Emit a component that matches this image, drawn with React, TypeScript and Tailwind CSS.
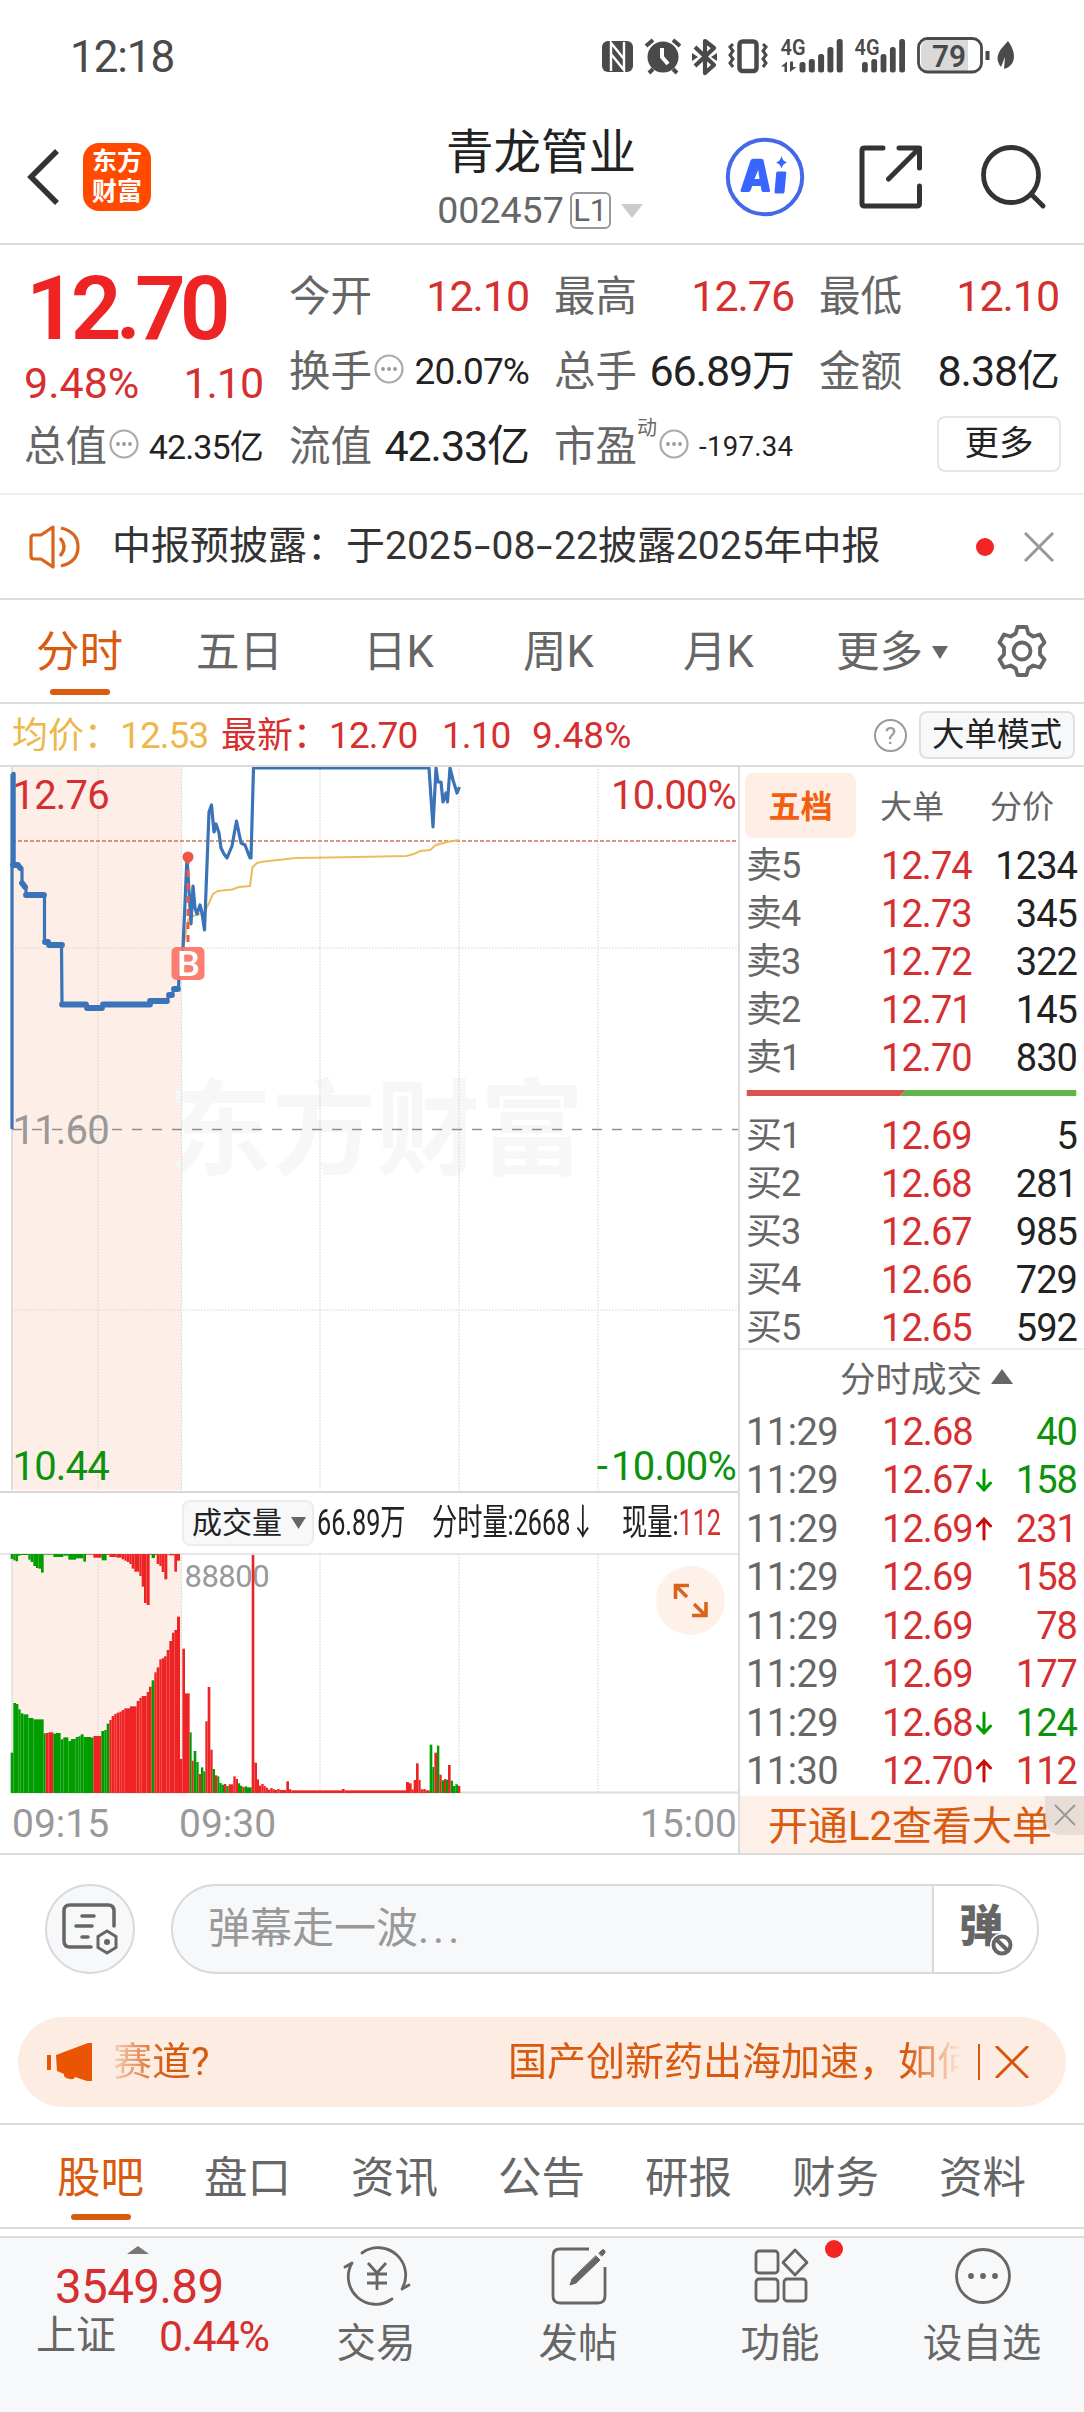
import type { ReactNode } from "react";
import clsx from "clsx";

const RED = "#ee2424";
const GREEN = "#009d00";

type Tone = "up" | "down" | "plain";

const toneClass: Record<Tone, string> = {
  up: "text-[#d62f2f]",
  down: "text-[#0c920c]",
  plain: "text-[#222]",
};

const asks = [
  ["卖5", "12.74", "1234"],
  ["卖4", "12.73", "345"],
  ["卖3", "12.72", "322"],
  ["卖2", "12.71", "145"],
  ["卖1", "12.70", "830"],
];

const bids = [
  ["买1", "12.69", "5"],
  ["买2", "12.68", "281"],
  ["买3", "12.67", "985"],
  ["买4", "12.66", "729"],
  ["买5", "12.65", "592"],
];

const trades: { time: string; price: string; dir?: "up" | "down"; vol: string; tone: Tone }[] = [
  { time: "11:29", price: "12.68", vol: "40", tone: "down" },
  { time: "11:29", price: "12.67", dir: "down", vol: "158", tone: "down" },
  { time: "11:29", price: "12.69", dir: "up", vol: "231", tone: "up" },
  { time: "11:29", price: "12.69", vol: "158", tone: "up" },
  { time: "11:29", price: "12.69", vol: "78", tone: "up" },
  { time: "11:29", price: "12.69", vol: "177", tone: "up" },
  { time: "11:29", price: "12.68", dir: "down", vol: "124", tone: "down" },
  { time: "11:30", price: "12.70", dir: "up", vol: "112", tone: "up" },
];

// Volume bars as "right edge, top, colour", in thirds of a pixel.
const volume: [number, number, string][] = [
  [40, 758, "g"], [48, 609, "g"], [55, 612, "g"], [62, 628, "g"], [70, 640, "g"], [85, 643, "g"],
  [100, 654, "g"], [131, 658, "g"], [137, 700, "g"], [145, 699, "r"], [160, 697, "r"], [168, 701, "g"],
  [182, 699, "g"], [190, 718, "g"], [205, 712, "g"], [213, 723, "g"], [227, 717, "g"], [235, 711, "g"],
  [242, 709, "g"], [251, 703, "g"], [273, 711, "g"], [280, 713, "g"], [304, 708, "r"], [313, 693, "g"],
  [320, 690, "g"], [328, 671, "g"], [335, 660, "r"], [343, 648, "r"], [350, 642, "r"], [358, 638, "r"],
  [365, 635, "r"], [373, 630, "r"], [390, 625, "r"], [410, 619, "r"], [418, 603, "r"], [425, 594, "r"],
  [440, 588, "r"], [447, 576, "r"], [455, 560, "r"], [463, 541, "g"], [470, 517, "r"], [478, 502, "r"],
  [485, 478, "r"], [492, 475, "r"], [500, 469, "r"], [508, 450, "r"], [516, 423, "r"], [523, 398, "r"],
  [531, 390, "r"], [540, 350, "r"], [547, 777, "r"], [555, 446, "r"], [569, 580, "r"], [575, 697, "g"],
  [581, 782, "r"], [589, 753, "g"], [596, 786, "g"], [603, 822, "r"], [610, 802, "g"], [616, 814, "g"],
  [623, 664, "r"], [631, 561, "r"], [638, 749, "r"], [645, 807, "g"], [652, 826, "r"], [658, 829, "g"],
  [665, 849, "g"], [672, 854, "g"], [679, 852, "r"], [686, 858, "g"], [700, 853, "r"], [707, 829, "r"],
  [714, 837, "r"], [720, 850, "g"], [727, 857, "g"], [734, 861, "r"], [741, 859, "g"], [755, 862, "g"],
  [763, 165, "r"], [771, 788, "r"], [777, 838, "r"], [784, 857, "r"], [791, 852, "r"], [797, 858, "r"],
  [804, 863, "r"], [811, 869, "r"], [818, 864, "r"], [825, 868, "r"], [832, 870, "r"], [839, 867, "r"],
  [859, 870, "r"], [867, 844, "r"], [874, 868, "r"], [1026, 871, "r"], [1034, 867, "r"], [1218, 871, "r"],
  [1227, 846, "r"], [1235, 850, "r"], [1241, 868, "r"], [1248, 840, "r"], [1256, 790, "r"], [1262, 840, "r"],
  [1270, 868, "r"], [1277, 867, "r"], [1289, 871, "r"], [1297, 734, "g"], [1303, 801, "g"], [1311, 758, "r"],
  [1318, 737, "g"], [1325, 824, "r"], [1332, 841, "g"], [1338, 837, "r"], [1344, 839, "g"], [1352, 795, "r"],
  [1359, 842, "g"], [1366, 858, "g"], [1374, 853, "g"], [1381, 858, "r"],
];

// Unmatched auction volume, hanging from the top edge.
const unmatched: [number, number, string][] = [
  [40, 177, "g"], [47, 181, "g"], [54, 184, "g"], [62, 167, "g"], [85, 165, "g"], [92, 179, "g"],
  [100, 186, "g"], [108, 198, "g"], [115, 204, "g"], [123, 206, "g"], [131, 218, "g"], [160, 164, "g"],
  [190, 171, "g"], [205, 167, "g"], [228, 179, "g"], [250, 175, "g"], [258, 185, "g"], [280, 164, "r"],
  [305, 173, "r"], [320, 181, "g"], [328, 165, "r"], [350, 171, "r"], [365, 173, "r"], [373, 178, "r"],
  [380, 182, "r"], [388, 186, "r"], [395, 192, "r"], [403, 206, "r"], [418, 215, "r"], [425, 228, "r"],
  [432, 260, "r"], [440, 309, "r"], [449, 315, "r"], [455, 165, "r"], [465, 174, "g"], [470, 165, "r"],
  [478, 192, "r"], [485, 198, "r"], [493, 216, "r"], [502, 238, "r"], [508, 164, "r"], [523, 166, "r"],
  [531, 215, "r"], [540, 182, "r"],
];

function StatusIcons() {
  const bars = [62, 59, 54, 47, 39];
  return (
    <svg width="420" height="44" viewBox="598 34 420 44" fill="none" stroke="#4a4a4a" className="ml-auto">
      {/* NFC */}
      <rect x="602" y="41" width="31" height="31" rx="6" fill="#4a4a4a" stroke="none" />
      <path d="M611 71V43l13 16M624 42v28l-13-16" stroke="#fff" strokeWidth="2.4" />
      {/* Alarm */}
      <circle cx="663" cy="57" r="15.5" fill="#4a4a4a" stroke="none" />
      <path d="M646 46l7-6M680 46l-7-6M653 69l-4 4M673 69l4 4" strokeWidth="4" />
      <path d="M662 48v9l6 7" stroke="#fff" strokeWidth="4" />
      {/* Bluetooth */}
      <path d="M695 47l19 18-9 8V41l9 7-19 18" strokeWidth="4.2" strokeLinejoin="round" />
      <path d="M692 53l6 4-6 4zM717 53l-6 4 6 4z" fill="#4a4a4a" stroke="none" />
      {/* Vibrate */}
      <rect x="739.500" y="41.500" width="17" height="29.500" rx="3" strokeWidth="4.500" />
      <path d="M733 44l-3 3 3 4-3 4 3 4-3 4 3 4M763 44l3 3-3 4 3 4-3 4 3 4-3 4" strokeWidth="3" />
      {/* Signals */}
      <g fill="#4a4a4a" stroke="none">
        <text x="780.500" y="55" fontSize="22" fontWeight="600" textLength="25" lengthAdjust="spacingAndGlyphs">4G</text>
        <text x="854.500" y="55" fontSize="22" fontWeight="600" textLength="25" lengthAdjust="spacingAndGlyphs">4G</text>
        {bars.map((top, i) => (
          <g key={top}>
            <rect x={799.500 + i * 9.300} y={top} width="6" height={72.500 - top} rx="2.500" />
            <rect x={862 + i * 9.300} y={top} width="5.800" height={72.500 - top} rx="2.500" />
          </g>
        ))}
        <path d="M787 72V61.500l-6 5h3.500V72zM790 61.500V72l6.500-5H793v-5.500z" />
      </g>
      {/* Battery */}
      <path d="M929 40h39v31h-39a8 8 0 0 1-8-8V48a8 8 0 0 1 8-8z" fill="#d9d9d9" stroke="none" />
      <rect x="918.500" y="38.500" width="63" height="33.500" rx="9" strokeWidth="2.800" />
      <path d="M987.500 51v9" strokeWidth="4" />
      <text x="932" y="67" fontSize="32" fontWeight="600" fill="#4a4a4a" stroke="none" textLength="34" lengthAdjust="spacingAndGlyphs">79</text>
      <path d="M1008 41c9 12 8 25-4 28l1-12-4 10c-8-11 0-18 7-26z" fill="#4a4a4a" stroke="none" />
    </svg>
  );
}

function Dots({ className }: { className?: string }) {
  return (
    <svg width="30" height="30" viewBox="0 0 30 30" fill="none" className={clsx("mb-[5px] ml-[2px] shrink-0", className)}>
      <circle cx="15" cy="15" r="13.500" stroke="#aaa" strokeWidth="2.200" />
      <g fill="#999">
        <circle cx="9" cy="15" r="1.900" />
        <circle cx="15" cy="15" r="1.900" />
        <circle cx="21" cy="15" r="1.900" />
      </g>
    </svg>
  );
}

function Stat({ label, value, extra, className }: { label: string; value: string; extra?: ReactNode; className?: string }) {
  return (
    <div className="flex h-[75px] items-center justify-between whitespace-nowrap">
      <span className="flex items-center text-[41.500px] text-[#666]">
        {label}
        {extra}
      </span>
      <span className={clsx("tracking-tight", className)}>{value}</span>
    </div>
  );
}

function Header() {
  return (
    <header className="flex h-[145px] items-center border-b-2 border-[#dcdcdc] pt-[10px]">
      <svg width="34" height="58" viewBox="0 0 34 58" fill="none" className="ml-[26px]">
        <path d="M31 3L5 29l26 26" stroke="#333" strokeWidth="5.500" />
      </svg>
      <div className="ml-[23px] flex h-[68px] w-[68px] flex-col items-center justify-center gap-[5px] rounded-2xl bg-[#ff4a00] text-[25px] leading-[25px] font-bold text-white">
        <span>东方</span>
        <span>财富</span>
      </div>
      <div className="ml-[286px] flex w-[206px] flex-col items-center pt-[3px]">
        <h1 className="ml-[2px] text-[47.500px] leading-[54px] text-[#222]">青龙管业</h1>
        <div className="mt-[11px] flex h-[40px] items-center text-[37.500px] text-[#666]">
          002457
          <span className="ml-[6px] flex h-[37px] w-[41px] items-center justify-center rounded-md border-2 border-[#999] text-[31px]">L1</span>
          <svg width="22" height="14" viewBox="0 0 22 14" className="ml-[10px]">
            <path d="M0 0h22L11 14z" fill="#ccc" />
          </svg>
        </div>
      </div>
      <svg width="80" height="80" viewBox="0 0 80 80" fill="none" className="ml-[82px]">
        <circle cx="40" cy="40" r="37.200" stroke="#4468e8" strokeWidth="4" />
        <path
          d="M15.500 53.500l10-30q.7-1.800 2.600-1.800h8q2 0 2.500 1.900l6.500 30q.3 1.400-1.200 1.400h-5.500q-1.600 0-1.900-1.500l-.8-4.500h-8.500l-1.500 4.300q-.6 1.700-2.400 1.700h-6.300q-2 0-1.500-1.500zM29.500 42h5l-1.300-9z"
          fill="#3966ff"
        />
        <path d="M52.500 34.500h7.500q1.500 0 1.300 1.500L59.500 55q-.2 1.500-1.700 1.500h-7q-1.500 0-1.300-1.500l1.700-19q.2-1.500 1.300-1.500zM56.500 19q1 5 5.500 6.500-4.500 1.500-5.500 6-1-4.500-5.500-6 4.500-1.500 5.500-6.500z" fill="#3966ff" />
      </svg>
      <svg width="64" height="64" viewBox="0 0 64 64" fill="none" stroke="#333" strokeWidth="5" strokeLinecap="round" strokeLinejoin="round" className="ml-[54px]">
        <path d="M24 3H5.500Q3 3 3 5.500v53Q3 61 5.500 61H58q2.500 0 2.500-2.500V41M40 3h20.500v20M60 3.500L29.500 34" />
      </svg>
      <svg width="66" height="66" viewBox="0 0 66 66" fill="none" stroke="#333" strokeWidth="4.800" strokeLinecap="round" className="ml-[57px]">
        <circle cx="31" cy="31" r="27.500" />
        <path d="M52 51l11 11" />
      </svg>
    </header>
  );
}

function Quote() {
  return (
    <section className="flex h-[250px] border-b-2 border-[#eee] pl-[24px]">
      <div className="w-[239px]">
        <div className="flex h-[126px] items-center text-[89px] font-semibold tracking-[-6px] text-[#ee2424]">
          <span className="ml-[2px]">12.70</span>
        </div>
        <div className="flex h-[25px] items-center justify-between text-[43px] text-[#d62f2f]">
          <span>9.48%</span>
          <span className="tracking-tight">1.10</span>
        </div>
        <div className="pt-[13px]">
          <Stat label="总值" value="42.35亿" extra={<Dots />} className="text-[34px] text-[#222]" />
        </div>
      </div>
      <div className="ml-[26px] w-[240px] pt-[14px]">
        <Stat label="今开" value="12.10" className="text-[43px] text-[#d62f2f]" />
        <Stat label="换手" value="20.07%" extra={<Dots />} className="text-[37px] text-[#222]" />
        <Stat label="流值" value="42.33亿" className="text-[43px] text-[#222]" />
      </div>
      <div className="ml-[25px] w-[240px] pt-[14px]">
        <Stat label="最高" value="12.76" className="text-[43px] text-[#d62f2f]" />
        <Stat label="总手" value="66.89万" className="text-[43px] text-[#222]" />
        <div className="flex h-[75px] items-center whitespace-nowrap">
          <span className="text-[41.500px] text-[#666]">市盈</span>
          <span className="mb-[38px] text-[20px] text-[#666]">动</span>
          <Dots className="mr-[10px]" />
          <span className="text-[27.500px] tracking-[0.300px] text-[#222]">-197.34</span>
        </div>
      </div>
      <div className="ml-[25px] w-[240px] pt-[14px]">
        <Stat label="最低" value="12.10" className="text-[43px] text-[#d62f2f]" />
        <Stat label="金额" value="8.38亿" className="text-[43px] text-[#222]" />
        <div className="-mr-[2px] flex h-[69px] items-center justify-end">
          <button className="h-[56px] w-[124px] rounded-lg border-2 border-[#e6e6e6] text-[34.500px] text-[#222]">更多</button>
        </div>
      </div>
    </section>
  );
}

function Notice() {
  return (
    <section className="flex h-[105px] items-center border-b-2 border-[#dcdcdc]">
      <svg width="52" height="46" viewBox="0 0 52 46" fill="none" stroke="#d9641c" strokeWidth="3.200" className="ml-[29px]">
        <path d="M24 3L12 11H5q-3 0-3 3v18q0 3 3 3h7l12 8z" strokeLinejoin="round" />
        <path d="M31 14q8 9 0 18M32 4q17 4 17 19T32 42" />
      </svg>
      <span className="ml-[31px] text-[39px] whitespace-nowrap text-[#333]">
        中报预披露：于2025<span className="inline-block scale-x-150 px-[4px]">-</span>08
        <span className="inline-block scale-x-150 px-[4px]">-</span>22披露2025年中报
      </span>
      <span className="mr-[30px] ml-auto h-[18px] w-[18px] rounded-full bg-[#f22424]" />
      <svg width="30" height="30" viewBox="0 0 30 30" stroke="#999" strokeWidth="3" className="mr-[30px]">
        <path d="M1 1l28 28M29 1L1 29" />
      </svg>
    </section>
  );
}

function PeriodTabs() {
  return (
    <nav className="flex h-[104px] items-center border-b-2 border-[#dcdcdc] pt-[3px] text-[43.500px] text-[#666]">
      <div className="relative ml-[36px] w-[160px] text-[#d95b10]">
        分时
        <span className="absolute -bottom-[21px] left-[14px] h-[6px] w-[60px] rounded-full bg-[#d95b10]" />
      </div>
      <span className="w-[167px]">五日</span>
      <span className="w-[160px]">日K</span>
      <span className="w-[160px]">周K</span>
      <span className="w-[153px]">月K</span>
      <span>更多</span>
      <svg width="16" height="13" viewBox="0 0 16 13" className="ml-[9px]">
        <path d="M0 0h16L8 13z" fill="#666" />
      </svg>
      <svg width="54" height="54" viewBox="0 0 54 54" fill="none" stroke="#666" strokeWidth="3.800" strokeLinejoin="round" className="mr-[35px] mb-[3px] ml-auto">
        <path d="M22.500 3h9l1.800 6.500 5 3 6.700-2 4.500 8-4.500 5v7l4.500 5-4.500 8-6.700-2-5 3-1.800 6.500h-9l-1.800-6.500-5-3-6.700 2-4.500-8 4.500-5v-7l-4.500-5 4.500-8 6.700 2 5-3z" />
        <circle cx="27" cy="27" r="8.500" />
      </svg>
    </nav>
  );
}

function PriceInfo() {
  return (
    <div className="flex h-[63px] items-center border-b-2 border-[#dcdcdc] pt-[2px] text-[36px] text-[#d62f2f]">
      <span className="ml-[12px] w-[209px] text-[#edb84b]">
        均价：<span className="text-[37px] tracking-tight">12.53</span>
      </span>
      <span className="w-[221px]">
        最新：<span className="text-[37px] tracking-tight">12.70</span>
      </span>
      <span className="w-[90px] text-[37px] tracking-tight">1.10</span>
      <span className="text-[37px]">9.48%</span>
      <span className="mr-[12px] ml-auto flex h-[33px] w-[33px] items-center justify-center rounded-full border-2 border-[#999] text-[24px] text-[#999]">?</span>
      <button className="mr-[9px] mb-px h-[48px] w-[156px] rounded-lg border-2 border-[#dfe0e3] bg-[#f7f8fa] text-[32.500px] whitespace-nowrap text-[#222]">
        大单模式
      </button>
    </div>
  );
}

function PriceChart() {
  return (
    <svg width="738" height="724" viewBox="0 767 738 724" fill="none" className="block">
      <rect x="12" y="766" width="169.500" height="724" fill="#fdeee7" />
      <text x="168" y="1167" fontSize="104" fontWeight="700" fill="#f7f7f7" textLength="416">东方财富</text>
      <path d="M98 766v724M181.500 766v724M320 766v724M459 766v724M598 766v724M12 948h726M12 1310h726" stroke="#d6d6d6" strokeWidth="1.200" strokeDasharray="1.500 1.500" />
      <path d="M12 766v724" stroke="#ddd" strokeWidth="2" />
      <path d="M12 1129.500h726" stroke="#8f8f8f" strokeWidth="1.600" strokeDasharray="10 10" />
      <path d="M12 841h726" stroke="#d07a48" strokeWidth="1.500" strokeDasharray="4 2" />
      <path
        d="M183 950l5-30 5-4 11-3 5-10 4-9 5-3 14-1.500 7-2.500 11-1 2.500-19 4.500-4 7-1.500 14-1.500 18-2 34-.5 76-1.500 8-2 6-3 10-1 6-5 11-3 12-2"
        stroke="#edbc5e"
        strokeWidth="2"
      />
      <path d="M13.500 774v91" stroke="#3a73b8" strokeWidth="4.500" strokeLinecap="round" />
      <path d="M12 774v355" stroke="#3a73b8" strokeWidth="3.200" />
      <g stroke="#3a73b8" strokeLinejoin="round">
        <path
          d="M12 865h6l4 3v15l4 4v8h18.500v47h4.500v3l12.500.5.500 59h24l1 3.500h15l1-3.500h47v-3.500h17l2-6h3l2-6h4.500l.5-14 2.500-5 1.500-22 4-91 4 67 2-38 2 22 2 6 3-9 2 8 2.500 17 4.500-118 2.500-7 2.500 27 2-8 3 9 2 15 3 6 3 4 5-12 4.500-25 4.500 22 4 2 5 13h1l2.500-90H429l4 59 3-59 2 14h3l2 20 3-9 1.500 9 2.500-34 3 12 4 13 2.500-6"
          strokeWidth="3.200"
        />
        <path
          d="M13 865h5l2 3M22 883l3 4M26 895h18M45 942h3M49 945h13M62 1004.500h24M87 1008h15M103 1004.500h47M150 1001h17M169 995h3M174 989h4"
          strokeWidth="5.800"
          strokeLinecap="round"
        />
      </g>
      <path d="M188 857v90" stroke="#ef5a45" strokeWidth="3" strokeDasharray="7 6" />
      <circle cx="188" cy="857" r="5.500" fill="#ee5545" />
      <rect x="171.500" y="947" width="33" height="33" rx="5" fill="#fb7768" fillOpacity=".95" />
      <text x="177" y="976" fontSize="35" fontWeight="500" fill="#fff" textLength="23" lengthAdjust="spacingAndGlyphs">B</text>
      <g fontSize="40" letterSpacing="-0.800">
        <text x="12.500" y="809" fill="#d62f2f">12.76</text>
        <text x="736" y="809" fill="#d62f2f" textAnchor="end">10.00%</text>
        <text x="12.500" y="1144" fill="#999">11.60</text>
        <text x="12.500" y="1480" fill="#0c920c">10.44</text>
        <text x="736" y="1480" fill="#0c920c" textAnchor="end">
          <tspan>-</tspan>
          <tspan dx="4">10.00%</tspan>
        </text>
      </g>
    </svg>
  );
}

function VolumeChart() {
  return (
    <svg width="738" height="241" viewBox="0 1553 738 241" fill="none" className="block">
      <rect x="12" y="1554" width="169.500" height="238" fill="#fdeee7" />
      <path d="M98 1554v238M181.500 1554v238M320 1554v238M459 1554v238M598 1554v238" stroke="#d6d6d6" strokeWidth="1.200" strokeDasharray="1.500 1.500" />
      <path d="M12 1554v238M0 1554h738" stroke="#e0e0e0" strokeWidth="1.500" />
      <path d="M12 1792.500h726" stroke="#ddd" strokeWidth="2" />
      <text x="184.500" y="1587" fontSize="31" letterSpacing="-0.500" fill="#999">88800</text>
      {volume.map(([right, top, c], i) => {
        const left = i === 0 ? 32 : volume[i - 1][0];
        return <rect key={right} x={left / 3} y={1500 + top / 3} width={(right - left) / 3} height={(879 - top) / 3} fill={c === "g" ? GREEN : RED} />;
      })}
      {unmatched.map(([right, bottom, c], i) => {
        const left = i === 0 ? 32 : unmatched[i - 1][0];
        return <rect key={right} x={left / 3} y="1554" width={(right - left) / 3} height={(bottom - 162) / 3} fill={c === "g" ? GREEN : RED} />;
      })}
      <circle cx="690.500" cy="1600.500" r="34.500" fill="#fef1e9" />
      <path d="M687 1597l-11-11M675.500 1599v-13.500H689M694 1604l11 11M706 1602v13.500H692" stroke="#d9641c" strokeWidth="3.600" />
    </svg>
  );
}

function BookRow({ row }: { row: string[] }) {
  return (
    <div className="flex h-12 items-center text-[38px] tracking-tight">
      <span className="w-[135px] text-[36px] text-[#666]">{row[0]}</span>
      <span className="text-[#d62f2f]">{row[1]}</span>
      <span className="ml-auto text-[#222]">{row[2]}</span>
    </div>
  );
}

function TickArrow({ dir }: { dir: "up" | "down" }) {
  return (
    <svg width="16" height="24" viewBox="0 0 16 24" fill="none" stroke={dir === "up" ? "#c80c0c" : GREEN} strokeWidth="3" strokeLinecap="round" className="ml-[3px]">
      <path d={dir === "up" ? "M8 22V2M1.500 9L8 2l6.500 7" : "M8 2v20M1.500 15L8 22l6.500-7"} />
    </svg>
  );
}

function OrderBook() {
  return (
    <aside className="flex w-[344px] flex-col">
      <div className="mt-[6px] ml-[5px] flex h-[66px] items-center text-[32px] text-[#666]">
        <span className="flex h-full w-[111px] items-center justify-center rounded-lg bg-[#feeee6] pt-[2px] font-bold text-[#f0600f]">五档</span>
        <span className="ml-[24px] pt-[2px]">大单</span>
        <span className="ml-[46px] pt-[2px]">分价</span>
      </div>
      <div className="mt-[4px] pr-[7px] pl-[6px]">
        {asks.map((row) => (
          <BookRow key={row[0]} row={row} />
        ))}
      </div>
      <svg width="333" height="6" viewBox="0 0 333 6" className="mt-[8px] ml-[5px]">
        <path d="M0 0h161l-6 6H0z" fill="#dc5050" />
        <path d="M161 0h172v6H155z" fill="#62b54a" />
      </svg>
      <div className="mt-[16px] h-[238px] border-b-2 border-[#eee] pr-[7px] pl-[6px]">
        {bids.map((row) => (
          <BookRow key={row[0]} row={row} />
        ))}
      </div>
      <div className="flex h-[58px] items-center justify-center pt-[3px] pl-[29px] text-[35.500px] text-[#666]">
        分时成交
        <svg width="22" height="15" viewBox="0 0 22 15" className="mb-[7px] ml-[9px]">
          <path d="M11 0l11 15H0z" fill="#666" />
        </svg>
      </div>
      <div className="pr-[7px] pl-[6px]">
        {trades.map((t, i) => (
          <div key={i} className="flex h-[48.500px] items-center text-[38px] tracking-tight">
            <span className="w-[136px] tracking-[-0.500px] text-[#666]">{t.time}</span>
            <span className="text-[#d62f2f]">{t.price}</span>
            {t.dir && <TickArrow dir={t.dir} />}
            <span className={clsx("ml-auto", toneClass[t.tone])}>{t.vol}</span>
          </div>
        ))}
      </div>
      <div className="relative mt-auto flex h-[58px] items-center bg-[#fdf0e9] pt-[5px] pl-[28px] text-[40px] whitespace-nowrap text-[#d95b10]">
        开通L2查看大单
        <span className="absolute top-0 right-0 flex h-[39px] w-[39px] items-center justify-center rounded-bl-2xl bg-[#e4d8d2]/80">
          <svg width="22" height="22" viewBox="0 0 22 22" stroke="#999" strokeWidth="2">
            <path d="M1 1l20 20M21 1L1 21" />
          </svg>
        </span>
      </div>
    </aside>
  );
}

function Chart() {
  return (
    <section className="flex h-[1088px] border-b-2 border-[#dcdcdc]">
      <div className="w-[740px] border-r-2 border-[#dcdcdc]">
        <PriceChart />
        <div className="flex h-[62px] items-center border-t-2 border-[#d6d6d6] pb-[1px] pl-[182px] text-[#222]">
          <span className="flex h-[46px] w-[132px] items-center rounded-lg border-2 border-[#ececf0] bg-[#f7f8fa] pl-[8px] text-[30px]">
            成交量
            <svg width="15" height="12" viewBox="0 0 15 12" className="ml-[9px]">
              <path d="M0 0h15L7.500 12z" fill="#666" />
            </svg>
          </span>
          <span className="ml-[3px] w-[115px] origin-left scale-x-[0.7] text-[36px] whitespace-nowrap">66.89万</span>
          <span className="w-[190px] origin-left scale-x-[0.7] text-[36px] whitespace-nowrap">分时量:2668↓</span>
          <span className="w-[100px] origin-left scale-x-[0.7] text-[36px] whitespace-nowrap">
            现量:<span className="text-[#d62f2f]">112</span>
          </span>
        </div>
        <VolumeChart />
        <div className="flex h-[60px] items-center pt-px pl-[12px] text-[39px] text-[#999]">
          <span className="w-[167px]">09:15</span>
          <span>09:30</span>
          <span className="mr-px ml-auto">15:00</span>
        </div>
      </div>
      <OrderBook />
    </section>
  );
}

function DanmuBar() {
  return (
    <section className="flex h-[147px] items-center pl-[45px]">
      <div className="flex h-[90px] w-[90px] items-center justify-center rounded-full border-2 border-[#d9dadd] bg-[#f7f8fa]">
        <svg width="56" height="52" viewBox="0 0 56 52" fill="none" stroke="#666" strokeWidth="3.500" strokeLinecap="round">
          <path d="M29 44H8q-6 0-6-6V8q0-6 6-6h38q6 0 6 6v15" />
          <path d="M20 13h12M14 23h16M20 34h6" />
          <path d="M45 28l9 5.500v11L45 50l-9-5.500v-11z" strokeWidth="3" />
          <circle cx="45" cy="39" r="3" fill="#666" stroke="none" />
        </svg>
      </div>
      <div className="ml-[36px] flex h-[90px] w-[868px] items-center overflow-hidden rounded-full border-2 border-[#d9dadd] bg-[#f7f8fa]">
        <span className="w-[759px] pl-[35px] text-[42px] text-[#999]">
          弹幕走一波<span className="tracking-[4px]">...</span>
        </span>
        <span className="relative flex h-full flex-1 items-center border-l-2 border-[#d9dadd] bg-white pb-[4px] pl-[25px] text-[44px] font-black text-[#666]">
          弹
          <svg width="24" height="24" viewBox="0 0 24 24" fill="none" stroke="#666" strokeWidth="4" className="absolute top-[47px] left-[56px] rounded-full bg-white">
            <circle cx="12" cy="12" r="8.500" />
            <path d="M6 6l12 12" />
          </svg>
        </span>
      </div>
    </section>
  );
}

function Marquee() {
  return (
    <section className="mx-[18px] mt-[15px] flex h-[90px] items-center rounded-full bg-[#fcece2] text-[39px] whitespace-nowrap text-[#d75a10]">
      <svg width="46" height="40" viewBox="0 0 46 40" fill="#ea5504" className="ml-[29px]">
        <path d="M0 13h4v15H0zM9 13L41 1h4v38h-5l-12-4q-1 3-5 2-7-1-6-5l-7-3z" />
      </svg>
      <div className="ml-[20px] flex h-[50px] w-[848px] items-center overflow-hidden [mask-image:linear-gradient(to_right,rgba(0,0,0,0.2),#000_50px,#000_795px,transparent_848px)]">
        <span className="w-[395px] shrink-0">赛道?</span>
        <span className="shrink-0">国产创新药出海加速，如何</span>
      </div>
      <span className="ml-[17px] h-[36px] w-[1.500px] bg-[#d05a16]" />
      <svg width="34" height="32" viewBox="0 0 34 32" stroke="#d9540c" strokeWidth="3" className="ml-[15px]">
        <path d="M1 0l32 32M33 0L1 32" />
      </svg>
    </section>
  );
}

function InfoTabs() {
  const tabs = ["股吧", "盘口", "资讯", "公告", "研报", "财务", "资料"];
  return (
    <nav className="mt-[16px] flex h-[106px] items-center justify-between border-y-2 border-[#dcdcdc] pr-[58px] pl-[57px] pt-[5px] text-[43.500px] text-[#666]">
      {tabs.map((tab, i) => (
        <span key={tab} className={clsx("relative", i === 0 && "text-[#d95b10]")}>
          {tab}
          {i === 0 && <span className="absolute -bottom-[20px] left-[14px] h-[6px] w-[60px] rounded-full bg-[#d95b10]" />}
        </span>
      ))}
    </nav>
  );
}

function NavItem({ label, badge, children }: { label: string; badge?: boolean; children: ReactNode }) {
  return (
    <div className="relative flex w-[202px] flex-col items-center text-[39.500px] text-[#666]">
      <svg width="68" height="60" viewBox="-34 -30 68 60" fill="none" stroke="#666" strokeWidth="2.800" strokeLinecap="round" strokeLinejoin="round" className="mt-[8px] mb-[18px]">
        {children}
      </svg>
      <span className="-ml-[2px]">{label}</span>
      {badge && <span className="absolute top-[2px] left-[145px] h-[18px] w-[18px] rounded-full bg-[#f22424]" />}
    </div>
  );
}

function BottomBar() {
  return (
    <footer className="mt-[7px] flex h-[177px] border-t-2 border-[#dcdcdc] bg-[#f7f8fa]">
      <div className="w-[276px] text-[#d62f2f]">
        <svg width="22" height="8" viewBox="0 0 22 8" className="mt-[8px] ml-[127px]">
          <path d="M11 0l11 8H0z" fill="#777" />
        </svg>
        <div className="mt-[10px] ml-[55px] text-[47.500px] tracking-[-0.600px]">3549.89</div>
        <div className="mt-[3px] flex items-center justify-between pr-[7px] pl-[36px] text-[43px] tracking-tight">
          <span className="text-[40px] tracking-normal text-[#666]">上证</span>
          0.44%
        </div>
      </div>
      <NavItem label="交易">
        <path d="M-15-23A27.500 27.500 0 0 1 25 13l7-4M15 23A27.500 27.500 0 0 1-25-13l-7 4" />
        <path d="M-9-13L0-3l9-10M0-3v17M-10-2h20M-10 7h20" strokeLinecap="butt" />
      </NavItem>
      <NavItem label="发帖">
        <path d="M10-27h-29q-7 0-7 7v40q0 7 7 7h38q7 0 7-7V-9" strokeLinecap="butt" />
        <path d="M17-20l4 4L-3 7l-6 2 2-6zM20-23l3-3q2-1 3 1t-3 5z" fill="#666" strokeWidth="1" />
      </NavItem>
      <NavItem label="功能" badge>
        <rect x="-25" y="-25" width="22" height="22" rx="3" />
        <rect x="-25" y="3" width="22" height="22" rx="3" />
        <rect x="3" y="3" width="22" height="22" rx="3" />
        <path d="M14-26l12 12.500L14-1 2-13.500z" />
      </NavItem>
      <NavItem label="设自选">
        <circle r="26.500" />
        <g fill="#666" stroke="none">
          <circle cx="-12" r="2.900" />
          <circle r="2.900" />
          <circle cx="12" r="2.900" />
        </g>
      </NavItem>
    </footer>
  );
}

export default function App() {
  return (
    <main className="h-[2412px] w-[1084px] overflow-hidden bg-white font-[Roboto,'Noto_Sans_CJK_SC',sans-serif] leading-none">
      <div className="flex h-[100px] items-center pt-[14px] pl-[70px]">
        <span className="text-[44px] tracking-tight text-[#4a4a4a]">12:18</span>
        <div className="mr-[66px] mb-[2px] ml-auto">
          <StatusIcons />
        </div>
      </div>
      <Header />
      <Quote />
      <Notice />
      <PeriodTabs />
      <PriceInfo />
      <Chart />
      <DanmuBar />
      <Marquee />
      <InfoTabs />
      <BottomBar />
    </main>
  );
}
